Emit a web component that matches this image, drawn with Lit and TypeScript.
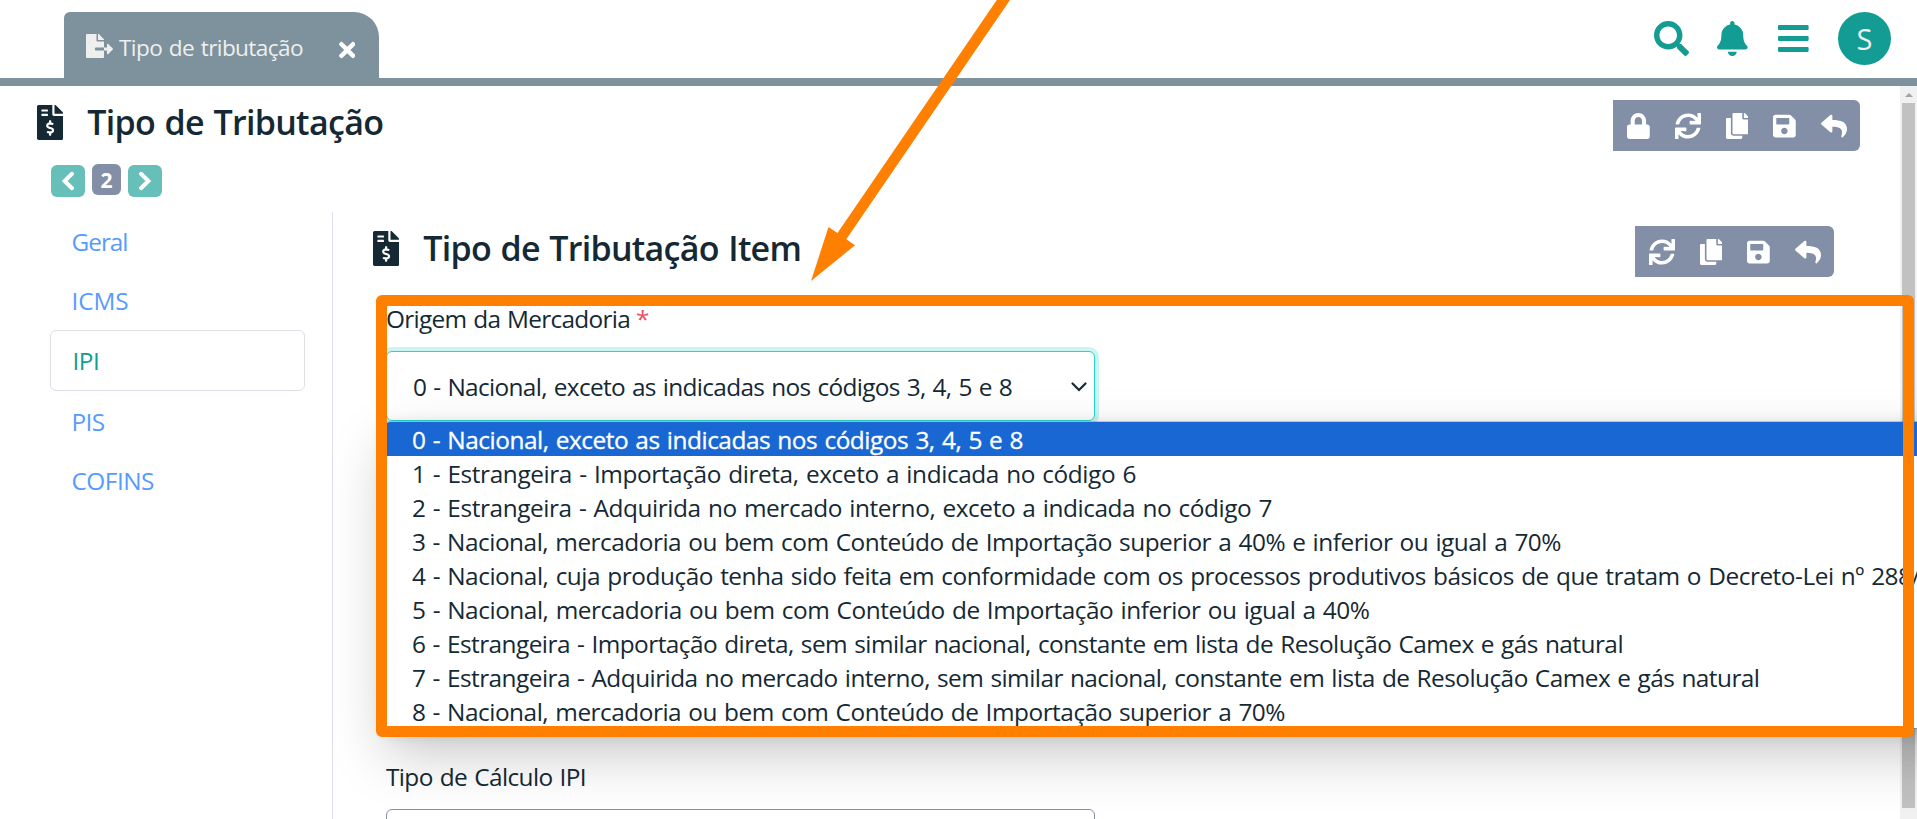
import { LitElement, html, css, svg } from "lit";
import { customElement, property } from "lit/decorators.js";

interface Glyph { w: number; d: string }

const GLYPHS: Record<string, Glyph> = {
  fileExport: { w: 576, d: "M384 121.9c0-6.3-2.5-12.4-7-16.9L279.1 7c-4.5-4.5-10.6-7-17-7H256v128h128zM571 308l-95.7-96.4c-10.1-10.1-27.4-3-27.4 11.3V288h-64v64h64v65.2c0 14.3 17.3 21.4 27.4 11.3L571 332c6.6-6.6 6.6-17.4 0-24zm-379 28v-32c0-8.8 7.2-16 16-16h176V160H248c-13.2 0-24-10.8-24-24V0H24C10.7 0 0 10.7 0 24v464c0 13.3 10.7 24 24 24h336c13.3 0 24-10.7 24-24V352H208c-8.8 0-16-7.2-16-16z" },
  close: { w: 352, d: "M242.72 256l100.07-100.07c12.28-12.28 12.28-32.19 0-44.48l-22.24-22.24c-12.28-12.28-32.19-12.28-44.48 0L176 189.28 75.93 89.21c-12.28-12.28-32.19-12.28-44.48 0L9.21 111.45c-12.28 12.28-12.28 32.19 0 44.48L109.28 256 9.21 356.07c-12.28 12.28-12.28 32.19 0 44.48l22.24 22.24c12.28 12.28 32.2 12.28 44.48 0L176 322.72l100.07 100.07c12.28 12.28 32.2 12.28 44.48 0l22.24-22.24c12.28-12.28 12.28-32.19 0-44.48L242.72 256z" },
  invoice: { w: 384, d: "M377 105L279.1 7c-4.5-4.5-10.6-7-17-7H256v128h128v-6.1c0-6.3-2.5-12.4-7-16.9zm-153 31V0H24C10.7 0 0 10.7 0 24v464c0 13.3 10.7 24 24 24h336c13.3 0 24-10.7 24-24V160H248c-13.2 0-24-10.8-24-24zM64 72c0-4.42 3.58-8 8-8h80c4.42 0 8 3.58 8 8v16c0 4.42-3.58 8-8 8H72c-4.42 0-8-3.58-8-8V72zm0 80v-16c0-4.42 3.58-8 8-8h80c4.42 0 8 3.58 8 8v16c0 4.42-3.58 8-8 8H72c-4.42 0-8-3.58-8-8zm144 263.88V440c0 4.42-3.58 8-8 8h-16c-4.42 0-8-3.58-8-8v-24.29c-11.29-.58-22.27-4.52-31.37-11.35-3.9-2.93-4.1-8.77-.57-12.14l11.75-11.21c2.77-2.64 6.89-2.76 10.13-.73 3.87 2.42 8.26 3.72 12.82 3.72h28.11c6.5 0 11.8-5.92 11.8-13.19 0-5.95-3.61-11.19-8.77-12.73l-45-13.5c-18.59-5.58-31.58-23.42-31.58-43.39 0-24.52 19.05-44.44 42.67-45.07V232c0-4.42 3.58-8 8-8h16c4.42 0 8 3.58 8 8v24.29c11.29.58 22.27 4.51 31.37 11.35 3.9 2.93 4.1 8.77.57 12.14l-11.75 11.21c-2.77 2.64-6.89 2.76-10.13.73-3.87-2.43-8.26-3.72-12.82-3.72h-28.11c-6.5 0-11.8 5.92-11.8 13.19 0 5.95 3.61 11.19 8.77 12.73l45 13.5c18.59 5.58 31.58 23.42 31.58 43.39 0 24.53-19.05 44.44-42.67 45.07z" },
  search: { w: 512, d: "M505 442.7L405.3 343c-4.5-4.5-10.6-7-17-7H372c27.6-35.3 44-79.7 44-128C416 93.1 322.9 0 208 0S0 93.1 0 208s93.1 208 208 208c48.3 0 92.7-16.4 128-44v16.3c0 6.4 2.5 12.5 7 17l99.7 99.7c9.4 9.4 24.6 9.4 33.9 0l28.3-28.3c9.4-9.4 9.4-24.6.1-34zM208 336c-70.7 0-128-57.2-128-128 0-70.7 57.2-128 128-128 70.7 0 128 57.2 128 128 0 70.7-57.2 128-128 128z" },
  bell: { w: 448, d: "M224 512c35.32 0 63.97-28.65 63.97-64H160.03c0 35.35 28.65 64 63.97 64zm215.39-149.71c-19.32-20.76-55.47-51.99-55.47-154.29 0-77.7-54.48-139.9-127.94-155.16V32c0-17.67-14.32-32-31.98-32s-31.98 14.33-31.98 32v20.84C118.56 68.1 64.08 130.3 64.08 208c0 102.3-36.15 133.53-55.47 154.29-6 6.45-8.66 14.16-8.61 21.71.11 16.4 12.98 32 32.1 32h383.8c19.12 0 32-15.6 32.1-32 .05-7.55-2.61-15.27-8.61-21.71z" },
  bars: { w: 448, d: "M16 132h416c8.837 0 16-7.163 16-16V76c0-8.837-7.163-16-16-16H16C7.163 60 0 67.163 0 76v40c0 8.837 7.163 16 16 16zm0 160h416c8.837 0 16-7.163 16-16v-40c0-8.837-7.163-16-16-16H16c-8.837 0-16 7.163-16 16v40c0 8.837 7.163 16 16 16zm0 160h416c8.837 0 16-7.163 16-16v-40c0-8.837-7.163-16-16-16H16c-8.837 0-16 7.163-16 16v40c0 8.837 7.163 16 16 16z" },
  lock: { w: 448, d: "M400 224h-24v-72C376 68.2 307.8 0 224 0S72 68.2 72 152v72H48c-26.5 0-48 21.5-48 48v192c0 26.5 21.5 48 48 48h352c26.5 0 48-21.5 48-48V272c0-26.5-21.5-48-48-48zm-104 0H152v-72c0-39.7 32.3-72 72-72s72 32.3 72 72v72z" },
  sync: { w: 512, d: "M440.65 12.57l4 82.77A247.16 247.16 0 0 0 255.83 8C134.73 8 33.91 94.92 12.29 209.82A12 12 0 0 0 24.09 224h49.05a12 12 0 0 0 11.67-9.26 175.91 175.91 0 0 1 317-56.94l-101.46-4.86a12 12 0 0 0-12.57 12v47.41a12 12 0 0 0 12 12H500a12 12 0 0 0 12-12V12a12 12 0 0 0-12-12h-47.37a12 12 0 0 0-11.98 12.57zM255.83 432a175.61 175.61 0 0 1-146-77.8l101.8 4.87a12 12 0 0 0 12.57-12v-47.4a12 12 0 0 0-12-12H12a12 12 0 0 0-12 12V500a12 12 0 0 0 12 12h47.35a12 12 0 0 0 12-12.6l-4.15-82.57A247.17 247.17 0 0 0 255.83 504c121.11 0 221.93-86.92 243.55-201.82a12 12 0 0 0-11.8-14.18h-49.05a12 12 0 0 0-11.67 9.26A175.86 175.86 0 0 1 255.83 432z" },
  copy: { w: 448, d: "M320 448v40c0 13.255-10.745 24-24 24H24c-13.255 0-24-10.745-24-24V120c0-13.255 10.745-24 24-24h72v296c0 30.879 25.121 56 56 56h168zm0-344V0H152c-13.255 0-24 10.745-24 24v368c0 13.255 10.745 24 24 24h272c13.255 0 24-10.745 24-24V128H344c-13.2 0-24-10.8-24-24zm120.971-31.029L375.029 7.029A24 24 0 0 0 358.059 0H352v96h96v-6.059a24 24 0 0 0-7.029-16.97z" },
  save: { w: 448, d: "M433.941 129.941l-83.882-83.882A48 48 0 0 0 316.118 32H48C21.49 32 0 53.49 0 80v352c0 26.51 21.49 48 48 48h352c26.51 0 48-21.49 48-48V163.882a48 48 0 0 0-14.059-33.941zM224 416c-35.346 0-64-28.654-64-64 0-35.346 28.654-64 64-64s64 28.654 64 64c0 35.346-28.654 64-64 64zm96-304.52V212c0 6.627-5.373 12-12 12H76c-6.627 0-12-5.373-12-12V108c0-6.627 5.373-12 12-12h228.52c3.183 0 6.235 1.264 8.485 3.515l3.48 3.48A11.996 11.996 0 0 1 320 111.48z" },
  reply: { w: 512, d: "M8.309 189.836L184.313 37.851C199.719 24.546 224 35.347 224 56.015v80.053c160.629 1.839 288 34.032 288 186.258 0 61.441-39.581 122.309-83.333 154.132-13.653 9.931-33.111-2.533-28.077-18.631 45.344-145.012-21.507-183.51-176.59-185.742V360c0 20.7-24.3 31.453-39.687 18.164l-176.004-152c-11.071-9.562-11.086-26.753 0-36.328z" },
};

const icon = (name: string, h: number) => {
  const g = GLYPHS[name];
  return html`<svg class="icon" width=${(g.w * h) / 512} height=${h} viewBox="0 0 ${g.w} 512">${svg`<path fill="currentColor" d=${g.d}></path>`}</svg>`;
};

/** One line of text whose tracking is adjusted so that it spans a given width. */
@customElement("tracked-text")
export class TrackedText extends LitElement {
  @property() text = "";
  @property({ type: Number }) span = 0;

  static styles = css`
    :host { display: inline-block; white-space: pre; word-spacing: 1.3px; }
  `;

  updated() {
    const line = this.renderRoot.querySelector("span") as HTMLElement;
    line.style.letterSpacing = "0px";
    const natural = line.getBoundingClientRect().width;
    if (this.span > 0 && natural > 0) {
      line.style.letterSpacing = `${((this.span - natural) / this.text.length).toFixed(4)}px`;
    }
  }

  render() {
    return html`<span>${this.text}</span>`;
  }
}

const t = (text: string, span: number) => html`<tracked-text .text=${text} .span=${span}></tracked-text>`;

@customElement("tool-bar")
export class ToolBar extends LitElement {
  @property({ attribute: false }) tools: string[] = [];

  static styles = css`
    :host { display: block; }
    .bar {
      display: flex; align-items: center; gap: 25px; height: 51px; box-sizing: border-box;
      padding: 0 13px 0 14px; background: #838fa6; color: #fff; border-radius: 0 6px 6px 0;
    }
    .icon { display: block; }
  `;

  render() {
    return html`<div class="bar">${this.tools.map((n) => icon(n, 26))}</div>`;
  }
}

const MENU: [string, number][] = [["Geral", 56], ["ICMS", 57], ["IPI", 27], ["PIS", 33], ["COFINS", 82.5]];

const OPTIONS: [string, number][] = [
  ["0 - Nacional, exceto as indicadas nos códigos 3, 4, 5 e 8", 611],
  ["1 - Estrangeira - Importação direta, exceto a indicada no código 6", 724],
  ["2 - Estrangeira - Adquirida no mercado interno, exceto a indicada no código 7", 860],
  ["3 - Nacional, mercadoria ou bem com Conteúdo de Importação superior a 40% e inferior ou igual a 70%", 1149],
  ["4 - Nacional, cuja produção tenha sido feita em conformidade com os processos produtivos básicos de que tratam o Decreto-Lei nº 288/1967", 1562],
  ["5 - Nacional, mercadoria ou bem com Conteúdo de Importação inferior ou igual a 40%", 957.5],
  ["6 - Estrangeira - Importação direta, sem similar nacional, constante em lista de Resolução Camex e gás natural", 1211],
  ["7 - Estrangeira - Adquirida no mercado interno, sem similar nacional, constante em lista de Resolução Camex e gás natural", 1347.500],
  ["8 - Nacional, mercadoria ou bem com Conteúdo de Importação superior a 70%", 873],
];

@customElement("app-root")
export class AppRoot extends LitElement {
  static styles = css`
    :host {
      display: block; position: relative; width: 100%; height: 819px; overflow: hidden;
      background: #fff; color: #152935;
      font: 400 24.4px/34px "Open Sans", "Noto Sans", sans-serif;
    }
    .icon { display: block; flex: none; }
    .top {
      display: flex; justify-content: space-between; align-items: flex-start;
      height: 86px; box-sizing: border-box; padding: 12px 26px 0 64px; border-bottom: 8px solid #7d929c;
    }
    .tab {
      display: flex; align-items: center; width: 315px; height: 66px; box-sizing: border-box;
      padding: 2px 24px 0 22px; background: #7d929c; color: #efefef;
      border-radius: 6px 25px 0 0; font-size: 22.6px;
    }
    .tab tracked-text { margin: 3px auto 0 6px; }
    .tab .x { color: #fff; margin-top: 7px; }
    .actions { display: flex; align-items: center; color: #139c93; height: 53px; }
    .bell { margin-left: 28.4px; }
    .bars { margin-left: 30.6px; }
    .avatar {
      display: flex; align-items: center; justify-content: center; width: 53px; height: 53px;
      margin-left: 29px; border-radius: 50%; background: #139c93; color: #efefef; font-size: 29px;
    }
    .view { display: flex; height: 733px; }
    .page { flex: 1; min-width: 0; }
    .head { display: flex; align-items: center; height: 51px; }
    .head h1 { margin: 0; font-size: 34px; line-height: 46px; font-weight: 600; }
    .head tool-bar { margin-left: auto; }
    .main-head { padding: 14px 40px 0 37px; }
    .head .icon { margin-top: -7px; }
    .main-head h1 { margin: -7px 0 0 24px; }
    .pager { display: flex; align-items: flex-start; padding: 13px 0 0 51px; height: 48px; box-sizing: border-box; }
    .step {
      display: flex; align-items: center; justify-content: center; width: 34px; height: 32px;
      margin-top: 1px; border-radius: 6px; background: #66bfb8;
    }
    .step svg { fill: none; stroke: #fff; stroke-width: 4; stroke-linecap: round; stroke-linejoin: miter; }
    .count {
      width: 29px; height: 31px; margin: 0 7px; border-radius: 6px; background: #838fa6; color: #fff;
      font-size: 21px; font-weight: 700; line-height: 33px; text-align: center;
    }
    .body { display: flex; height: 607px; margin-top: 13px; }
    .menu { width: 332px; flex: none; padding-left: 50px; box-sizing: border-box; }
    .item {
      display: flex; align-items: center; height: 59px; width: 255px; box-sizing: border-box;
      padding-left: 21.5px; color: #589bff;
    }
    .item.on { height: 61px; border: 1px solid #dcdfe6; border-radius: 6px; color: #139c93; }
    .item.on + .item { margin-top: 1px; }
    .form { flex: 1; min-width: 0; border-left: 1px solid #dcdfe6; padding-left: 53px; }
    .sub-head { padding: 14px 66px 0 0; margin-left: -13px; }
    .sub-head h1 { margin: -7px 0 0 24px; }
    .label { display: flex; gap: 6px; height: 34px; margin-top: 25px; }
    .req { color: #ea4c62; }
    .select {
      display: flex; align-items: center; justify-content: space-between; width: 709px; height: 70px;
      box-sizing: border-box; padding: 2px 6px 0 26px; border: 1px solid #838fa6; border-radius: 6px; background: #fff;
    }
    .select.focus { margin-top: 15px; border-color: #2ad4c8; box-shadow: 0 0 0 4px #c8f6f2; }
    .second { margin-top: 339px; }
    .plain { margin-top: 15px; }
    .scroll { width: 17px; flex: none; background: #f1f1f1; display: flex; flex-direction: column; align-items: center; }
    .up { margin: 7px 0 6px; display: block; }
    .thumb { width: 13px; height: 705px; background: #c1c1c1; }
    .popup {
      position: absolute; left: 386px; top: 422px; width: 1600px; height: 306px; background: #fff;
      border-radius: 4px; overflow: hidden;
      box-shadow: 0 0 0 1px rgba(0,0,0,.16), 0 25.6px 57.6px rgba(0,0,0,.22), 0 4.8px 14.4px rgba(0,0,0,.18);
    }
    .opt { height: 34px; padding-left: 26px; line-height: 35px; white-space: nowrap; }
    .opt.sel { background: #1967d2; color: #fff; -webkit-text-stroke: .3px #fff; }
    .frame {
      position: absolute; left: 376px; top: 295px; width: 1538px; height: 442px;
      box-sizing: border-box; border: 11px solid #ff8000; border-radius: 6px;
    }
    .arrow { position: absolute; left: 800px; top: 0; }
  `;

  render() {
    return html`
      <header class="top">
        <div class="tab">
          ${icon("fileExport", 24)}${t("Tipo de tributação", 184)}
          <span class="x">${icon("close", 24)}</span>
        </div>
        <div class="actions">
          ${icon("search", 35)}
          <span class="bell">${icon("bell", 35)}</span>
          <span class="bars">${icon("bars", 35)}</span>
          <span class="avatar">S</span>
        </div>
      </header>
      <div class="view">
        <main class="page">
          <div class="head main-head">
            ${icon("invoice", 35)}
            <h1>${t("Tipo de Tributação", 296)}</h1>
            <tool-bar .tools=${["lock", "sync", "copy", "save", "reply"]}></tool-bar>
          </div>
          <div class="pager">
            <span class="step"><svg width="14" height="20" viewBox="0 0 14 20"><path d="M11 2.8 3.6 10 11 17.2" /></svg></span>
            <span class="count">2</span>
            <span class="step"><svg width="14" height="20" viewBox="0 0 14 20"><path d="M3 2.8 10.4 10 3 17.2" /></svg></span>
          </div>
          <div class="body">
            <nav class="menu">
              ${MENU.map(([label, w]) => html`<div class="item ${label === "IPI" ? "on" : ""}">${t(label, w)}</div>`)}
            </nav>
            <section class="form">
              <div class="head sub-head">
                ${icon("invoice", 35)}
                <h1>${t("Tipo de Tributação Item", 378)}</h1>
                <tool-bar .tools=${["sync", "copy", "save", "reply"]}></tool-bar>
              </div>
              <div class="label">${t("Origem da Mercadoria", 244)}<span class="req">*</span></div>
              <div class="select focus">
                ${t("0 - Nacional, exceto as indicadas nos códigos 3, 4, 5 e 8", 599)}
                <svg width="18" height="14" viewBox="0 0 18 14" fill="none" stroke="#152935" stroke-width="2.2" stroke-linecap="round"><path d="M2.5 3.5 9 10l6.500-6.500" /></svg>
              </div>
              <div class="label second">${t("Tipo de Cálculo IPI", 200)}</div>
              <div class="select plain"></div>
            </section>
          </div>
        </main>
        <div class="scroll">
          <svg class="up" width="8" height="4" viewBox="0 0 8 4"><path fill="#a3a3a3" d="M4 0l4 4H0z" /></svg>
          <div class="thumb"></div>
        </div>
      </div>
      <div class="popup">
        ${OPTIONS.map(([label, w], i) => html`<div class="opt ${i === 0 ? "sel" : ""}">${t(label, w)}</div>`)}
      </div>
      <div class="frame"></div>
      <svg class="arrow" width="240" height="300" viewBox="0 0 240 300">
        <path fill="#ff8000" d="M196.800 0H210L46.300 239.300 55 245.300 11 281 28.500 227 37.500 233z" />
      </svg>
    `;
  }
}
